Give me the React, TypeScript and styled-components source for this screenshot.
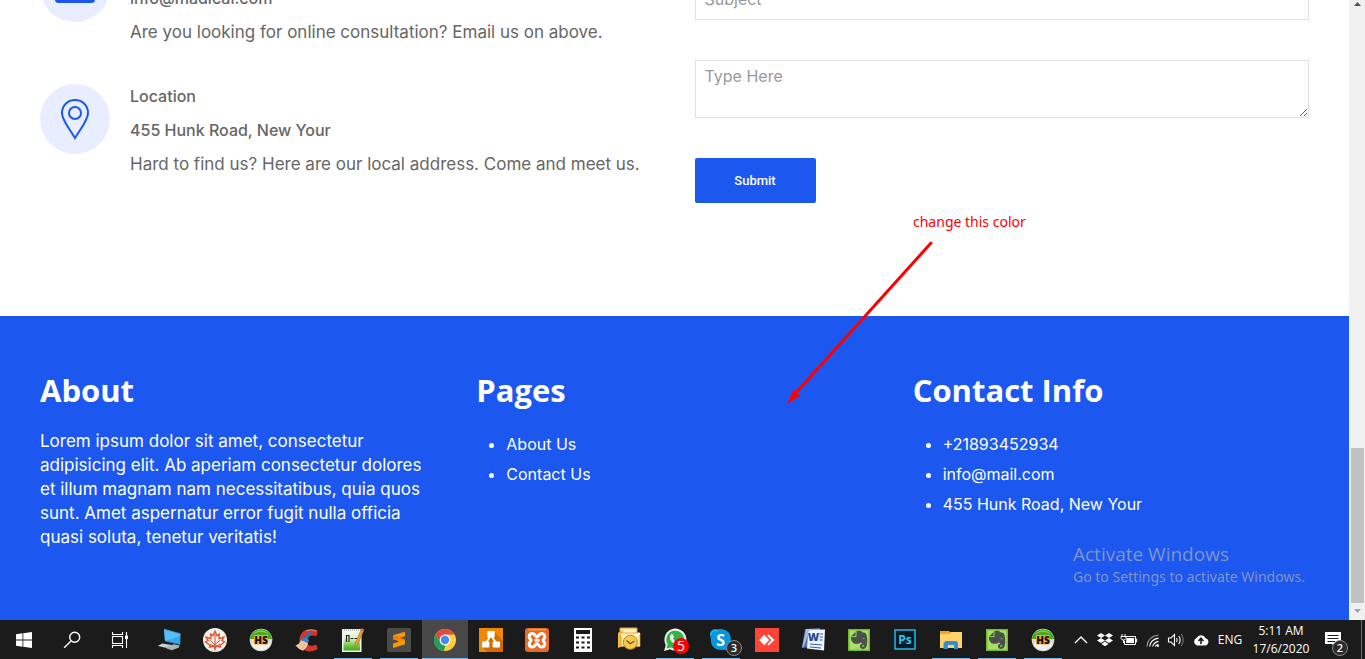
import React from "react";
import styled, { createGlobalStyle } from "styled-components";

const BLUE = "#1c57f0";
const BODY_FONT = `"Inter", "Open Sans", sans-serif`;
const SYSTEM_FONT = `"Open Sans", "Noto Sans", sans-serif`;

const GlobalStyle = createGlobalStyle`
  *, *::before, *::after { box-sizing: border-box; }
  body { margin: 0; background: #fff; font-family: ${BODY_FONT}; font-size: 16px; line-height: 24px; color: #666; }
  h2, h3, p, ul { margin: 0; padding: 0; }
`;

const Desktop = styled.div`
  position: relative;
  display: flex;
  flex-direction: column;
  height: 100vh;
  overflow: hidden;
`;

const BrowserArea = styled.div`
  flex: 1;
  min-height: 0;
  display: flex;
`;

/* The page is scrolled to its end, so its content hangs from the bottom edge. */
const Page = styled.div`
  flex: 1;
  min-width: 0;
  display: flex;
  flex-direction: column;
  justify-content: flex-end;
  overflow: hidden;
`;

const ContactSection = styled.section`
  flex: none;
  display: grid;
  grid-template-columns: 1fr 1fr;
  align-items: end;
  gap: 40px;
  padding: 0 40px 113px;
`;

const ContactList = styled.div`
  display: flex;
  flex-direction: column;
  gap: 40px;
  padding-bottom: 27px;
`;

const ContactItem = styled.div`
  display: flex;
  gap: 20px;
`;

const IconCircle = styled.div`
  flex: none;
  display: flex;
  align-items: center;
  justify-content: center;
  width: 70px;
  height: 70px;
  border-radius: 50%;
  background: #e8edff;
`;

const ContactText = styled.div`
  display: flex;
  flex-direction: column;
  gap: 10px;
`;

const ContactTitle = styled.h3`
  font-size: 16px;
  line-height: 24px;
  font-weight: 500;
`;

const Paragraph = styled.p`
  font-size: 17px;
  line-height: 24px;
`;

const Form = styled.form`
  display: flex;
  flex-direction: column;
  align-items: flex-start;
  gap: 40px;
`;

const Field = styled.input`
  display: block;
  width: 100%;
  height: 42px;
  padding: 0 9px;
  border: 1px solid #e1e1e1;
  background: #fff;
  font: 16px/24px ${BODY_FONT};
  &::placeholder { color: #999; }
`;

const MessageField = styled(Field).attrs({ as: "textarea" })`
  height: 58px;
  padding: 3px 9px;
`;

const SubmitButton = styled.button`
  width: 121px;
  height: 45px;
  border: 0;
  border-radius: 2px;
  background: ${BLUE};
  color: #fff;
  font: 500 13px Roboto, "Liberation Sans", sans-serif;
`;

const Footer = styled.footer`
  flex: none;
  display: grid;
  grid-template-columns: repeat(3, 1fr);
  gap: 40px;
  padding: 50px 40px 71px;
  background: ${BLUE};
  color: #fff;
`;

const FooterTitle = styled.h2`
  margin-bottom: 15px;
  font: bold 31px/48px ${SYSTEM_FONT};
`;

const FooterList = styled.ul`
  padding-left: 30px;
  line-height: 30px;
`;

const FooterLink = styled.a`
  color: inherit;
  text-decoration: none;
`;

const Scrollbar = styled.div`
  flex: none;
  display: flex;
  flex-direction: column;
  justify-content: space-between;
  align-items: center;
  width: 16px;
  background: #f0f0f0;
`;

const ScrollArrow = styled.svg`
  width: 16px;
  height: 9px;
`;

const ScrollEnd = styled.div`
  display: flex;
  flex-direction: column;
  align-items: center;
  gap: 4px;
  padding-bottom: 4px;
`;

const ScrollThumb = styled.div`
  width: 13px;
  height: 155px;
  background: #c1c1c1;
`;

const Note = styled.p`
  position: absolute;
  left: 913px;
  top: 212px;
  color: #f00;
  font: 14px/20px "Noto Sans", sans-serif;
`;

const NoteArrow = styled.svg`
  position: absolute;
  left: 780px;
  top: 236px;
  width: 160px;
  height: 172px;
  pointer-events: none;
`;

const Watermark = styled.div`
  position: absolute;
  left: 1073px;
  top: 541px;
  color: #7f95c6;
  font: 14px/20px "Noto Sans", sans-serif;
  white-space: nowrap;
  pointer-events: none;
`;

const WatermarkTitle = styled.p`
  font: 19px/26px ${SYSTEM_FONT};
`;

const Taskbar = styled.nav`
  flex: none;
  display: flex;
  justify-content: space-between;
  height: 39px;
  background: #1b1b1b;
  color: #fff;
  font-family: ${SYSTEM_FONT};
`;

const TaskGroup = styled.div`
  display: flex;
`;

const SystemGroup = styled(TaskGroup)`
  padding-right: 2px;
`;

const TaskButton = styled.button<{ $wide?: boolean; $active?: boolean; $line?: boolean }>`
  position: relative;
  display: flex;
  align-items: center;
  justify-content: center;
  width: ${(p) => (p.$wide ? 48 : 46)}px;
  padding: 1px 0 0;
  border: 0;
  background: ${(p) => (p.$active ? "#484848" : "transparent")};
  color: #fff;
  &::after {
    content: "";
    display: ${(p) => (p.$line || p.$active ? "block" : "none")};
    position: absolute;
    bottom: 0;
    left: ${(p) => (p.$active ? 0 : 4)}px;
    right: ${(p) => (p.$active ? 0 : 4)}px;
    height: 1px;
    background: #76b9ed;
  }
`;

const Art = styled.svg`
  display: block;
  width: 24px;
  height: 24px;
  overflow: visible;
`;

const Badge = styled.span<{ $red?: boolean }>`
  position: absolute;
  right: ${(p) => (p.$red ? 9 : 2)}px;
  bottom: ${(p) => (p.$red ? 5 : 3)}px;
  display: flex;
  align-items: center;
  justify-content: center;
  width: 16px;
  height: 16px;
  border-radius: 50%;
  border: ${(p) => (p.$red ? "0" : "1px solid #8a8a8a")};
  background: ${(p) => (p.$red ? "#f00" : "#2b2b2b")};
  color: #fff;
  font: ${(p) => (p.$red ? "14px" : "600 11px")}/14px ${SYSTEM_FONT};
`;

const TrayButton = styled.button`
  display: flex;
  align-items: center;
  justify-content: center;
  width: 24px;
  padding: 1px 0 0;
  border: 0;
  background: transparent;
`;

const Language = styled(TrayButton)`
  width: 34px;
  color: #fff;
  font: 12px/16px ${SYSTEM_FONT};
`;

const Clock = styled(Language)`
  flex-direction: column;
  gap: 2px;
  width: 68px;
  white-space: nowrap;
`;

const ActionButton = styled(TrayButton)`
  position: relative;
  width: 46px;
  padding-right: 10px;
`;

const ActionBadge = styled(Badge)`
  right: 13px;
`;

const ShowDesktop = styled.button`
  width: 4px;
  padding: 0;
  border: 0;
  border-left: 1px solid #6a6a6a;
  background: transparent;
`;

const HsArt = () => (
  <Art viewBox="0 0 24 24">
    <circle cx="12" cy="12" r="11.3" fill="#d9ddd6" />
    <path d="M.8 11A11.3 11.3 0 0 1 23.2 11Z" fill="#45aa1d" />
    <path d="M4 6.5A10 10 0 0 1 20 6.5Q12 1 4 6.5" fill="#82cf57" />
    <path d="M2 15.5H22A11 11 0 0 1 2 15.5" fill="#f1f2ee" />
    <rect x="5" y="7" width="14" height="9.5" fill="#f9a826" />
    <text x="12" y="15.5" textAnchor="middle" fontFamily="Open Sans" fontSize="10" fontWeight="800" fill="#111">HS</text>
  </Art>
);

const EvernoteArt = () => (
  <Art viewBox="0 0 24 24">
    <rect x="1" y="1" width="22" height="22" fill="#72b936" />
    <rect x="2.5" y="2.5" width="19" height="19" fill="#a9df67" />
    <path d="M4 8.6 9 3.4C11 2.4 14.4 2.8 15.4 4.2L18.6 5C20.4 8 20.8 13 19.7 18C19 21.6 13.8 21.9 13 19C12.6 17.2 13.6 15.9 15.4 15.7C14.8 15.2 14.4 14.8 14 14.2C12.9 16 9 16.2 6.6 15.2C4.4 14 3.4 10.6 4 8.6Z" fill="#4b514a" />
    <path d="M4.4 8.6H9V3.8" fill="none" stroke="#a9df67" strokeWidth=".9" />
    <path d="M15.4 10.6Q16.7 9.2 17.8 10.9Z" fill="#b9e986" />
    <path d="M15 18.6Q15.6 17.3 17.2 17.9" fill="none" stroke="#b9e986" />
  </Art>
);

type Task = { name: string; art: React.ReactNode; line?: boolean; active?: boolean; badge?: string; red?: boolean };

const systemTasks: Task[] = [
  {
    name: "Start",
    art: (
      <Art viewBox="0 0 24 24">
        <path d="M4 6.2 10.5 5.3V11.4H4ZM11.3 5.2 20 4V11.4H11.3ZM4 12.4H10.5V18.7L4 17.8ZM11.3 12.4H20V20L11.3 18.8Z" fill="#fff" />
      </Art>
    ),
  },
  {
    name: "Search",
    art: (
      <Art viewBox="0 0 24 24" fill="none" stroke="#fff" strokeWidth="1.4">
        <circle cx="14.7" cy="9.3" r="5" />
        <path d="M11 13 4.2 19.8" />
      </Art>
    ),
  },
  {
    name: "Task view",
    art: (
      <Art viewBox="0 0 24 24" fill="none" stroke="#fff" strokeWidth="1.1">
        <rect x="4.500" y="8.500" width="10" height="7" />
        <path d="M4.500 4V6.500H14.500V4M4.500 20V17.500H14.500V20M18.500 4V7.500M18.500 11V20" />
        <path d="M17 7.500H20V11H17Z" fill="#fff" stroke="none" />
      </Art>
    ),
  },
];

const tasks: Task[] = [
  {
    name: "Remote computer",
    art: (
      <Art viewBox="0 0 24 24">
        <path d="M7 1 23.3 5.7 23 16.5 8 13Z" fill="#35a9ef" />
        <path d="M7 1 23.3 5.7V8L8 13Z" fill="#55bdf9" />
        <path d="M7 1 23.3 5.7 23 16.5 8 13" fill="none" stroke="#427c9c" strokeWidth=".7" />
        <path d="M.8 18 5 15.6 15 17 11 20.2Z" fill="#c8d0d4" />
        <path d="M10 18.5 17 16.3 22.5 17.5 22 19.6 15 22.3 9.5 20.6Z" fill="#a8b2b8" />
      </Art>
    ),
  },
  {
    name: "Maple",
    art: (
      <Art viewBox="0 0 24 24">
        <circle cx="12" cy="12" r="12" fill="#f2f1ef" />
        <path d="M12 3.2 14 7.6 16.3 6.1 16 10.5 20.9 9.2 19 12.6 21.5 14 17 17.2 17.4 19 12.8 18 12 21 11.2 18 6.6 19 7 17.2 2.5 14 5 12.6 3.1 9.2 8 10.5 7.7 6.1 10 7.6Z" fill="none" stroke="#e5582a" strokeWidth="1.4" />
        <path d="M12 6V18M12 16.5 6.5 12M12 16.5 17.5 12M11 18 7 16.4M13 18 17 16.4" stroke="#c9452c" fill="none" strokeWidth=".9" />
      </Art>
    ),
  },
  { name: "HS", art: <HsArt /> },
  {
    name: "CCleaner",
    art: (
      <Art viewBox="0 0 24 24">
        <path d="M22.5 2.5Q16-.5 10 2.2C3 6 2.5 17 8.5 21.5Q14 25.5 22.6 21.2L21.5 16.5Q15 19.5 12 15.6C9 11 14 5.5 21.6 8.3Z" fill="#ce382c" />
        <path d="M11 3Q16 .8 21.5 3" fill="none" stroke="#e9786a" />
        <path d="M14 3.5 16.2 4.5 12.5 11.5 10 10Z" fill="#1e78c5" />
        <path d="M7.5 10Q10 8.5 14.2 12L13 15 6 12.5Z" fill="#2c82cc" />
        <path d="M6 12.3 13 15Q12.5 19.5 8 22.7Q3 21 .5 17.5Q4 16.5 6 12.3Z" fill="#f2caa3" />
        <path d="M7 15 4 19M10 16 7 21" stroke="#d79d69" strokeWidth=".7" />
      </Art>
    ),
  },
  {
    name: "Notepad",
    line: true,
    art: (
      <Art viewBox="0 0 24 24">
        <defs>
          <linearGradient id="notepad-green" x1="0" y1="0" x2="0" y2="1">
            <stop offset="0" stopColor="#f4f8ef" />
            <stop offset=".35" stopColor="#e2f3d6" />
            <stop offset=".7" stopColor="#7bd048" />
            <stop offset="1" stopColor="#3fa31c" />
          </linearGradient>
        </defs>
        <path d="M1 1H20.500V24H1Z" fill="#f3f6f0" />
        <path d="M2.500 3.500H19V22.500H2.500Z" fill="url(#notepad-green)" />
        <path d="M3 2H20" stroke="#8a8a8a" strokeDasharray="1 1" />
        <path d="M5.500 7V14M5.500 7.500H8V14M9.500 10.500H12.500M13.500 10.500H16" stroke="#222" strokeWidth="1.2" fill="none" />
        <path d="M20.5.5 23 1.8 16.5 17 14 19 14 15.8Z" fill="#e7a12e" stroke="#98641c" strokeWidth=".5" />
        <path d="M20.5.5 23 1.8 22.3 3.5 19.7 2.3Z" fill="#d66b58" />
      </Art>
    ),
  },
  {
    name: "Sublime Text",
    line: true,
    art: (
      <Art viewBox="0 0 24 24">
        <rect width="24" height="24" rx="1.5" fill="#4b4b4b" />
        <path d="M6 7.2 18 3.7V8.2L11.2 10.2 18 12.4V16.3L6 20V15.6L12.7 13.5 6 11.3Z" fill="#ff9800" />
        <path d="M6 7.2 18 11.2V12.4L6 11.3Z" fill="#e58300" />
      </Art>
    ),
  },
  {
    name: "Chrome",
    active: true,
    art: (
      <Art viewBox="0 0 24 24">
        <circle cx="12" cy="12" r="11" fill="#ffcd42" />
        <path d="M2.5 6.5A11 11 0 0 1 21.5 6.5H12L7.2 14.7Z" fill="#e04a3f" />
        <path d="M2.5 6.5 7.2 14.7Q9.5 18 12.5 17L10.8 23A11 11 0 0 1 2.5 6.5" fill="#18a05f" />
        <circle cx="12" cy="12" r="5.4" fill="#fff" />
        <circle cx="12" cy="12" r="4.2" fill="#4688f4" />
      </Art>
    ),
  },
  {
    name: "Diagrams",
    art: (
      <Art viewBox="0 0 24 24">
        <rect width="24" height="24" fill="#f08705" />
        <path d="M15.5 4 24 12.5V24H8L3 19Z" fill="#d46e00" />
        <path d="M12 7 6.5 16M12 7 17.5 16" stroke="#fff" strokeWidth="1.8" />
        <rect x="8.3" y="3" width="7.4" height="6.5" rx="1" fill="#fff" />
        <rect x="3" y="13.5" width="7.4" height="6" rx="1" fill="#fff" />
        <rect x="13.6" y="13.5" width="7.4" height="6" rx="1" fill="#fff" />
      </Art>
    ),
  },
  {
    name: "XAMPP",
    art: (
      <Art viewBox="0 0 24 24">
        <rect width="24" height="24" rx="3" fill="#e96a24" />
        <path d="M3 1.8H21" stroke="#ffb078" />
        <path d="M12 9.200C10.500 9.200 10.500 5.500 7.400 5.500C5 5.500 4.200 7.400 4.200 9C4.200 11 6 11.200 6 12.300C6 13.400 4.200 13.600 4.200 15.800C4.200 17.500 5.200 19 7.400 19C10.500 19 10.500 15.400 12 15.400C13.500 15.400 13.500 19 16.600 19C18.800 19 19.800 17.500 19.800 15.800C19.800 13.600 18 13.400 18 12.300C18 11.200 19.800 11 19.800 9C19.800 7.400 19 5.500 16.600 5.500C13.500 5.500 13.500 9.200 12 9.200Z" fill="none" stroke="#fff" strokeWidth="3" />
        <path d="M9.500 12.300H14.500" stroke="#fff" strokeWidth="2.600" />
      </Art>
    ),
  },
  {
    name: "Calculator",
    art: (
      <Art viewBox="0 0 24 24">
        <path d="M3 0H21V24H3Z" fill="#fff" />
        <path d="M5 2H19V6H5Z" fill="#1b1b1b" />
        <path d="M5 9.500H8M10.500 9.500H13.500M16 9.500H19M5 14.500H8M10.500 14.500H13.500M16 14.500H19M5 19.500H8M10.500 19.500H13.500M16 19.500H19" stroke="#1b1b1b" strokeWidth="2.200" fill="none" />
      </Art>
    ),
  },
  {
    name: "Mail",
    art: (
      <Art viewBox="0 0 24 24">
        <path d="M3 0H20V15H3Z" fill="#fff0c4" stroke="#dc9b21" />
        <path d="M1 5 6 1.5V18L1 20Z" fill="#f6ba3d" />
        <path d="M4 5H23V18.5H4Z" fill="#ffe7a4" stroke="#d69823" strokeWidth=".7" />
        <path d="M4 6 13 12 22.5 5" fill="none" stroke="#fffdf3" strokeWidth="2" />
        <circle cx="13.3" cy="14.3" r="7" fill="#f6c84d" stroke="#bb8b18" />
        <path d="M9.5 12.5 13.2 15.8 17.5 13" fill="none" stroke="#775414" strokeWidth="1.2" />
      </Art>
    ),
  },
  {
    name: "WhatsApp",
    line: true,
    badge: "5",
    red: true,
    art: (
      <Art viewBox="0 0 24 24">
        <path d="M1 23 2.8 17A11 11 0 1 1 7 21.2Z" fill="#f5f7f5" />
        <path d="M3.2 20.6 4.7 16.6A9 9 0 1 1 7.8 19.5Z" fill="#2cb742" />
        <path d="M8.2 6.2 9.7 6 11 9 9.8 10.4Q11.4 13.2 14 14L15.4 12.8 18 14.2Q17.8 17 15 17C10 16.3 6.2 12 7 8Z" fill="#fff" />
      </Art>
    ),
  },
  {
    name: "Skype",
    line: true,
    badge: "3",
    art: (
      <Art viewBox="0 0 24 24">
        <path d="M1.2 8C.2 3 4 0 8.6 1.4C16-.2 22.3 4 21.8 12C24 17 20 24 14.5 21.8C6.5 23 1 18 2 11Z" fill="#0797df" />
        <path d="M2 7C2 3 6 2 9 3" fill="none" stroke="#47bff3" />
        <text x="11.7" y="17.5" textAnchor="middle" fontFamily="Open Sans" fontSize="16" fontWeight="700" fill="#fff">S</text>
      </Art>
    ),
  },
  {
    name: "AnyDesk",
    art: (
      <Art viewBox="0 0 24 24">
        <rect width="24" height="24" fill="#ff4336" />
        <path d="M9.2 6.8 14.2 12 9.2 17.2 4.2 12ZM12.3 7.8 13.8 6.4 19.5 12 13.8 17.6 12.3 16.2 16.4 12Z" fill="#fff" />
      </Art>
    ),
  },
  {
    name: "Word",
    art: (
      <Art viewBox="0 0 24 24">
        <path d="M4 1 19 0 18 18 1 20Z" fill="#4c72b8" />
        <path d="M5 1 9 1 3 18 1 20Z" fill="#a9bee4" />
        <path d="M9 1.500H24L23 22.500 6 20.500 7 5Z" fill="#f1f5fc" />
        <path d="M18.500 6H22M18.500 9H22M18.500 12H21.500M9 16 21 17M9 19 20 20" stroke="#315da8" strokeWidth="1.200" />
        <text x="12.500" y="13" textAnchor="middle" fontFamily="Open Sans" fontSize="11" fontWeight="800" fill="#1d4794">W</text>
      </Art>
    ),
  },
  { name: "Evernote", art: <EvernoteArt /> },
  {
    name: "Photoshop",
    art: (
      <Art viewBox="0 0 24 24">
        <rect x="2" y="2" width="20" height="19" fill="#071924" stroke="#20b9e8" strokeWidth="1.5" />
        <text x="12" y="16" textAnchor="middle" fontFamily="Open Sans" fontSize="12" fontWeight="700" fill="#31c5f0">Ps</text>
      </Art>
    ),
  },
  {
    name: "File Explorer",
    line: true,
    art: (
      <Art viewBox="0 0 24 24">
        <path d="M1 3H10L12 5H22V20H1Z" fill="#f1a51d" />
        <path d="M1 6H10L12 4H23V20H1Z" fill="#ffd368" />
        <path d="M4.5 21V15L6.5 13H17.5L19 15V21H15V17H8.8V21Z" fill="#338ed0" />
      </Art>
    ),
  },
  { name: "Evernote notes", line: true, art: <EvernoteArt /> },
  { name: "HS window", line: true, art: <HsArt /> },
];

const trayIcons = [
  { name: "Show hidden icons", art: <path d="M6 15 12 9 18 15" fill="none" stroke="#fff" strokeWidth="1.4" /> },
  {
    name: "Dropbox",
    art: <path d="M8 5 12 7.5 8 10 4 7.5ZM16 5 20 7.5 16 10 12 7.5ZM8 10 12 12.5 8 15 4 12.5ZM16 10 20 12.5 16 15 12 12.5ZM12 13.5 15.5 16 12 18.3 8.5 16Z" fill="#fff" />,
  },
  {
    name: "Battery",
    art: (
      <>
        <path d="M8.5 8.5H18.5V16.5H7.5V13M18.5 11H19.7V14H18.5" fill="none" stroke="#fff" />
        <path d="M9.5 10H17V15H9Z" fill="#fff" />
        <path d="M5 6V9M8 6V9M4 8.5H9V10.5Q8.5 12 6.5 12 4.5 12 4 10.5ZM6.5 12V15" fill="#1b1b1b" stroke="#fff" />
      </>
    ),
  },
  {
    name: "Wi-Fi",
    art: (
      <g fill="none" stroke="#fff" strokeWidth="1.2">
        <path d="M6 18.5Q6.5 8.5 17.5 7" stroke="#999" />
        <path d="M8.8 18.5Q9.5 11.5 17.5 10.2M11.7 18.5Q12.5 14.5 17.5 13.3M14.4 18.5Q15 16.8 17.5 16.3" />
        <circle cx="17" cy="18" r="1" fill="#fff" stroke="none" />
      </g>
    ),
  },
  {
    name: "Volume",
    art: (
      <g fill="none" stroke="#fff" strokeWidth="1.1">
        <path d="M3.5 10H6L9.5 6.5V17.5L6 14H3.5Z" />
        <path d="M11.5 10Q13 12 11.5 14M13.8 8Q16.5 12 13.8 16" />
        <path d="M16.3 6Q20 12 16.3 18" stroke="#777" />
      </g>
    ),
  },
  {
    name: "Cloud backup",
    art: (
      <>
        <path d="M8 17.5A4 4 0 0 1 7.5 10 5 5 0 0 1 16.5 10.3 3.7 3.7 0 0 1 16.6 17.5Z" fill="#fff" />
        <path d="M12 16V11M9.5 13 12 10.3 14.5 13" fill="none" stroke="#1b1b1b" strokeWidth="1.6" />
      </>
    ),
  },
];

const TaskItem = ({ task, wide }: { task: Task; wide?: boolean }) => (
  <TaskButton type="button" aria-label={task.name} $wide={wide} $line={task.line} $active={task.active}>
    {task.art}
    {task.badge && <Badge $red={task.red}>{task.badge}</Badge>}
  </TaskButton>
);

export default function App() {
  return (
    <Desktop>
      <GlobalStyle />
      <BrowserArea>
        <Page>
          <ContactSection>
            <ContactList>
              <ContactItem>
                <IconCircle>
                  <svg width="40" height="32" viewBox="0 0 40 32" fill="none" stroke={BLUE} strokeWidth="3">
                    <rect x="1.5" y="1.5" width="37" height="29" rx="2" />
                    <path d="M2 3 20 18 38 3" />
                  </svg>
                </IconCircle>
                <ContactText>
                  <ContactTitle>Email</ContactTitle>
                  <ContactTitle>info@madical.com</ContactTitle>
                  <Paragraph>Are you looking for online consultation? Email us on above.</Paragraph>
                </ContactText>
              </ContactItem>
              <ContactItem>
                <IconCircle>
                  <svg width="30" height="42" viewBox="0 0 30 42" fill="none" stroke={BLUE} strokeWidth="2">
                    <path d="M15 2C7.5 2 2 7.7 2 15C2 22 8 28.5 15 40C22 28.5 28 22 28 15C28 7.7 22.5 2 15 2Z" />
                    <circle cx="15" cy="15" r="6" />
                  </svg>
                </IconCircle>
                <ContactText>
                  <ContactTitle>Location</ContactTitle>
                  <ContactTitle>455 Hunk Road, New Your</ContactTitle>
                  <Paragraph>Hard to find us? Here are our local address. Come and meet us.</Paragraph>
                </ContactText>
              </ContactItem>
            </ContactList>
            <Form onSubmit={(e) => e.preventDefault()}>
              <Field type="text" placeholder="Subject" aria-label="Subject" />
              <MessageField placeholder="Type Here" aria-label="Message" />
              <SubmitButton type="submit">Submit</SubmitButton>
            </Form>
          </ContactSection>
          <Footer>
            <div>
              <FooterTitle>About</FooterTitle>
              <Paragraph>
                Lorem ipsum dolor sit amet, consectetur adipisicing elit. Ab aperiam consectetur dolores et illum
                magnam nam necessitatibus, quia quos sunt. Amet aspernatur error fugit nulla officia quasi soluta,
                tenetur veritatis!
              </Paragraph>
            </div>
            <div>
              <FooterTitle>Pages</FooterTitle>
              <FooterList>
                <li><FooterLink href="#about">About Us</FooterLink></li>
                <li><FooterLink href="#contact">Contact Us</FooterLink></li>
              </FooterList>
            </div>
            <div>
              <FooterTitle>Contact Info</FooterTitle>
              <FooterList>
                <li>+21893452934</li>
                <li>info@mail.com</li>
                <li>455 Hunk Road, New Your</li>
              </FooterList>
            </div>
          </Footer>
        </Page>
        <Scrollbar>
          <ScrollArrow viewBox="0 0 16 9"><path d="M5 6 8.500 2 12 6Z" fill="#505050" /></ScrollArrow>
          <ScrollEnd>
            <ScrollThumb />
            <ScrollArrow viewBox="0 0 16 9"><path d="M5 2H12L8.500 6Z" fill="#a3a3a3" /></ScrollArrow>
          </ScrollEnd>
        </Scrollbar>
      </BrowserArea>
      <Taskbar>
        <TaskGroup>
          <SystemGroup>
            {systemTasks.map((t) => <TaskItem key={t.name} task={t} wide />)}
          </SystemGroup>
          {tasks.map((t) => <TaskItem key={t.name} task={t} />)}
        </TaskGroup>
        <TaskGroup>
          {trayIcons.map((t) => (
            <TrayButton key={t.name} type="button" aria-label={t.name}>
              <Art viewBox="0 0 24 24">{t.art}</Art>
            </TrayButton>
          ))}
          <Language type="button">ENG</Language>
          <Clock type="button">
            <span>5:11 AM</span>
            <span>17/6/2020</span>
          </Clock>
          <ActionButton type="button" aria-label="Notifications">
            <Art viewBox="0 0 24 24">
              <path d="M4 4H20V16H15V20L11 16H4Z" fill="#fff" />
              <path d="M6.500 7.500H17.500M6.500 10.500H17.500M6.500 13.500H14" stroke="#1b1b1b" />
            </Art>
            <ActionBadge>2</ActionBadge>
          </ActionButton>
          <ShowDesktop type="button" aria-label="Show desktop" />
        </TaskGroup>
      </Taskbar>
      <Note>change this color</Note>
      <NoteArrow viewBox="0 0 160 172">
        <path d="M151 7 14 159" stroke="#f00" strokeWidth="3" strokeLinecap="round" />
        <path d="M7 168 13.500 153.500 20 160Z" fill="#f00" />
      </NoteArrow>
      <Watermark>
        <WatermarkTitle>Activate Windows</WatermarkTitle>
        <p>Go to Settings to activate Windows.</p>
      </Watermark>
    </Desktop>
  );
}
